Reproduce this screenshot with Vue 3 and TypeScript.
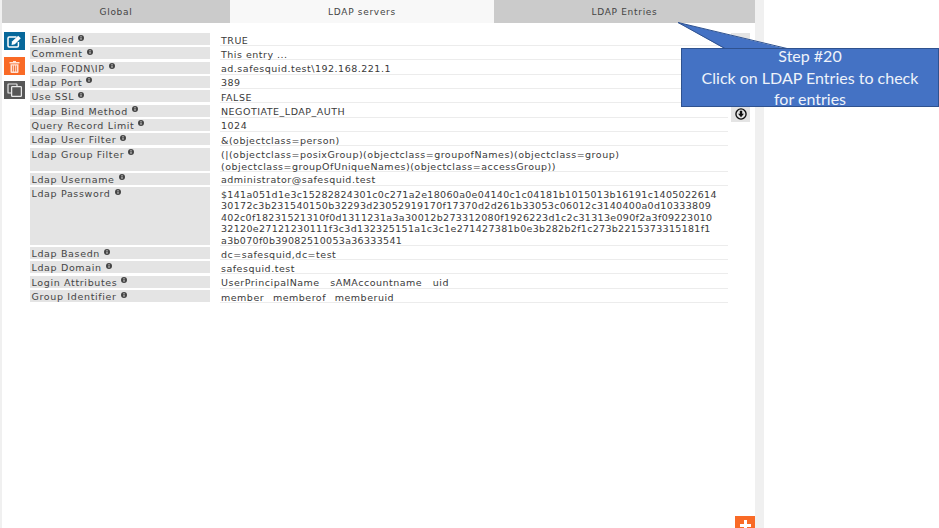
<script setup lang="ts">
interface Row { label: string; lines: string[]; hex?: boolean }
const rows: Row[] = [
  { label: 'Enabled', lines: ['TRUE'] },
  { label: 'Comment', lines: ['This entry ...'] },
  { label: 'Ldap FQDN\\IP', lines: ['ad.safesquid.test\\192.168.221.1'] },
  { label: 'Ldap Port', lines: ['389'] },
  { label: 'Use SSL', lines: ['FALSE'] },
  { label: 'Ldap Bind Method', lines: ['NEGOTIATE_LDAP_AUTH'] },
  { label: 'Query Record Limit', lines: ['1024'] },
  { label: 'Ldap User Filter', lines: ['&(objectclass=person)'] },
  { label: 'Ldap Group Filter', lines: ['(|(objectclass=posixGroup)(objectclass=groupofNames)(objectclass=group)', '(objectclass=groupOfUniqueNames)(objectclass=accessGroup))'] },
  { label: 'Ldap Username', lines: ['administrator@safesquid.test'] },
  { label: 'Ldap Password', hex: true, lines: ['$141a051d1e3c15282824301c0c271a2e18060a0e04140c1c04181b1015013b16191c1405022614', '30172c3b231540150b32293d23052919170f17370d2d261b33053c06012c3140400a0d10333809', '402c0f18231521310f0d1311231a3a30012b273312080f1926223d1c2c31313e090f2a3f09223010', '32120e27121230111f3c3d132325151a1c3c1e271427381b0e3b282b2f1c273b2215373315181f1', 'a3b070f0b39082510053a36333541'] },
  { label: 'Ldap Basedn', lines: ['dc=safesquid,dc=test'] },
  { label: 'Ldap Domain', lines: ['safesquid.test'] },
  { label: 'Login Attributes', lines: ['UserPrincipalName\u00a0\u00a0\u00a0sAMAccountname\u00a0\u00a0\u00a0uid'] },
  { label: 'Group Identifier', lines: ['member\u2002\u00a0memberof\u2002\u00a0memberuid'] }
]
const tabs = ['Global', 'LDAP servers', 'LDAP Entries']
</script>

<template>
  <div class="page">
    <div class="edge"></div>
    <div class="main">
      <div class="tabs">
        <div v-for="(t, i) in tabs" :key="t" class="tab" :class="{ active: i === 1 }">{{ t }}</div>
      </div>
      <div class="content">
        <div class="tools">
          <button class="tool blue" aria-label="Edit">
            <svg width="15" height="13" viewBox="0 0 15 13"><path d="M9.5 2H2.2C1.5 2 1 2.5 1 3.2v7.6C1 11.5 1.5 12 2.2 12h8c.7 0 1.2-.5 1.2-1.2V7" fill="none" stroke="#fff" stroke-width="1.5"/><path d="M5 6.5 11.2.8l2.6 2.4-6 6L4.6 10z" fill="#fff"/></svg>
          </button>
          <button class="tool orange" aria-label="Delete">
            <svg width="11" height="13" viewBox="0 0 11 13"><path d="M4 1h3v1h3.5v1.4H.5V2H4z" fill="#ffe3d6"/><path d="M1.5 4.2h8V12a1 1 0 0 1-1 1h-6a1 1 0 0 1-1-1z" fill="#ffe3d6"/><path d="M3.7 5.5v6M5.5 5.5v6M7.3 5.5v6" stroke="#f26a2a" stroke-width=".9"/></svg>
          </button>
          <button class="tool grey" aria-label="Copy">
            <svg width="15" height="14" viewBox="0 0 15 14"><path d="M10 3V1.6C10 1.2 9.800 1 9.400 1H1.600C1.200 1 1 1.200 1 1.600V9.400C1 9.800 1.200 10 1.600 10H4" fill="none" stroke="#e8e8e8" stroke-width="1.200"/><rect x="4.600" y="3.600" width="9.800" height="9.800" rx=".8" fill="none" stroke="#e8e8e8" stroke-width="1.300"/></svg>
          </button>
        </div>
        <div class="table">
          <div v-for="r in rows" :key="r.label" class="row">
            <div class="label">
              <span>{{ r.label }}</span>
              <svg class="info" width="6" height="6" viewBox="0 0 6 6"><circle cx="3" cy="3" r="3" fill="#444"/><rect x="2.500" y="2.500" width="1" height="2.300" fill="#ddd"/><rect x="2.500" y="1.100" width="1" height=".9" fill="#ddd"/></svg>
            </div>
            <div class="value">
              <div class="text" :class="{ hex: r.hex }">
                <div v-for="l in r.lines" :key="l">{{ l }}</div>
              </div>
            </div>
          </div>
        </div>
        <div class="side">
          <div class="sidebox top"></div>
          <div class="sidebox down">
            <svg width="12" height="12" viewBox="0 0 13 13"><circle cx="6.500" cy="6.500" r="5.500" fill="none" stroke="#111" stroke-width="1.500"/><path d="M5.200 3h2.600v3.200h1.900L6.500 10 3.300 6.200h1.900z" fill="#111"/></svg>
          </div>
        </div>
      </div>
      <div class="foot">
        <button class="add" aria-label="Add">
          <svg width="11" height="11" viewBox="0 0 11 11"><path d="M4 0h3v4h4v3H7v4H4V7H0V4h4z" fill="#fff"/></svg>
        </button>
      </div>
    </div>
    <div class="scroll"></div>

    <svg class="tail" width="112" height="29" viewBox="0 0 112 29"><path d="M0 .5 47 27H109z" fill="#4472c4"/><path d="M47 26.500 0 .5 109 26.500" fill="none" stroke="#2f528f"/></svg>
    <div class="callout">
      <div class="callout-text">
        <div>Step #20</div>
        <div>Click on LDAP Entries to check</div>
        <div>for entries</div>
      </div>
    </div>
  </div>
</template>

<style scoped>
.page {
  position: relative;
  display: flex;
  width: 939px;
  height: 528px;
  overflow: hidden;
  background: #fff;
  font-family: "DejaVu Sans", sans-serif;
}
.edge {
  width: 2px;
  flex: none;
  background: #f0f0f0;
}
.main {
  display: flex;
  flex-direction: column;
  width: 753px;
  flex: none;
}
.tabs {
  display: grid;
  grid-template-columns: 228px 264px 261px;
  height: 23px;
  flex: none;
}
.tab {
  display: flex;
  align-items: center;
  justify-content: center;
  background: #cbcbcb;
  color: #444;
  font-size: 9px;
  letter-spacing: .7px;
}
.tab.active {
  background: #f8f8f8;
}
.content {
  display: flex;
  flex: 1;
  min-height: 0;
  padding-top: 10px;
}
.tools {
  display: flex;
  flex-direction: column;
  flex: none;
  box-sizing: border-box;
  width: 28px;
  padding-left: 2px;
}
.tool {
  display: flex;
  align-items: center;
  justify-content: center;
  width: 21px;
  height: 18px;
  border: 0;
  padding: 0;
}
.tool.blue { background: #07689b; margin-top: -1px; }
.tool.orange { background: #f96a26; margin-top: 7px; }
.tool.grey { background: #575757; margin-top: 6px; }
.table {
  display: flex;
  flex-direction: column;
  gap: 2.330px;
  width: 698px;
  flex: none;
}
.row {
  display: flex;
  min-height: 12px;
}
.label {
  display: flex;
  align-items: flex-start;
  gap: 4px;
  width: 180px;
  flex: none;
  box-sizing: border-box;
  padding: 2px 0 0 1.500px;
  background: #e4e4e4;
  color: #444;
  font-size: 9.500px;
  letter-spacing: .65px;
  line-height: 10px;
}
.info {
  margin-top: -.5px;
}
.value {
  flex: 1;
  margin-left: 10px;
  padding-left: 1px;
  box-shadow: 0 1px 0 #ececec;
  color: #3a3a3a;
  font-size: 9.500px;
  line-height: 11.500px;
  white-space: nowrap;
}
.text {
  margin: 1.500px 0 -1.500px;
  letter-spacing: .5px;
}
.text.hex {
  letter-spacing: .31px;
}
.side {
  display: flex;
  flex-direction: column;
  flex: none;
  margin-left: 3px;
  width: 19px;
}
.sidebox {
  background: #e4e4e4;
  display: flex;
  align-items: center;
  justify-content: center;
}
.sidebox.top { height: 16px; }
.sidebox.down { height: 16px; margin-top: 57px; }
.foot {
  display: flex;
  justify-content: flex-end;
  height: 12px;
  flex: none;
  overflow: hidden;
}
.add {
  display: flex;
  align-items: flex-start;
  justify-content: center;
  flex: none;
  width: 20px;
  height: 20px;
  border: 0;
  padding: 4px 0 0;
  background: #f96a26;
}
.scroll {
  width: 9px;
  flex: none;
  background: #f0f0f0;
}
.tail {
  position: absolute;
  left: 678px;
  top: 21.500px;
}
.callout {
  position: absolute;
  left: 681px;
  top: 48px;
  width: 258px;
  height: 59px;
  box-sizing: border-box;
  border: 1px solid #2f528f;
  background: #4472c4;
  color: #eef2fa;
  font-family: Lato, sans-serif;
  font-size: 16px;
  line-height: 21.500px;
  text-align: center;
}
.callout-text {
  margin-top: -4px;
}
</style>
